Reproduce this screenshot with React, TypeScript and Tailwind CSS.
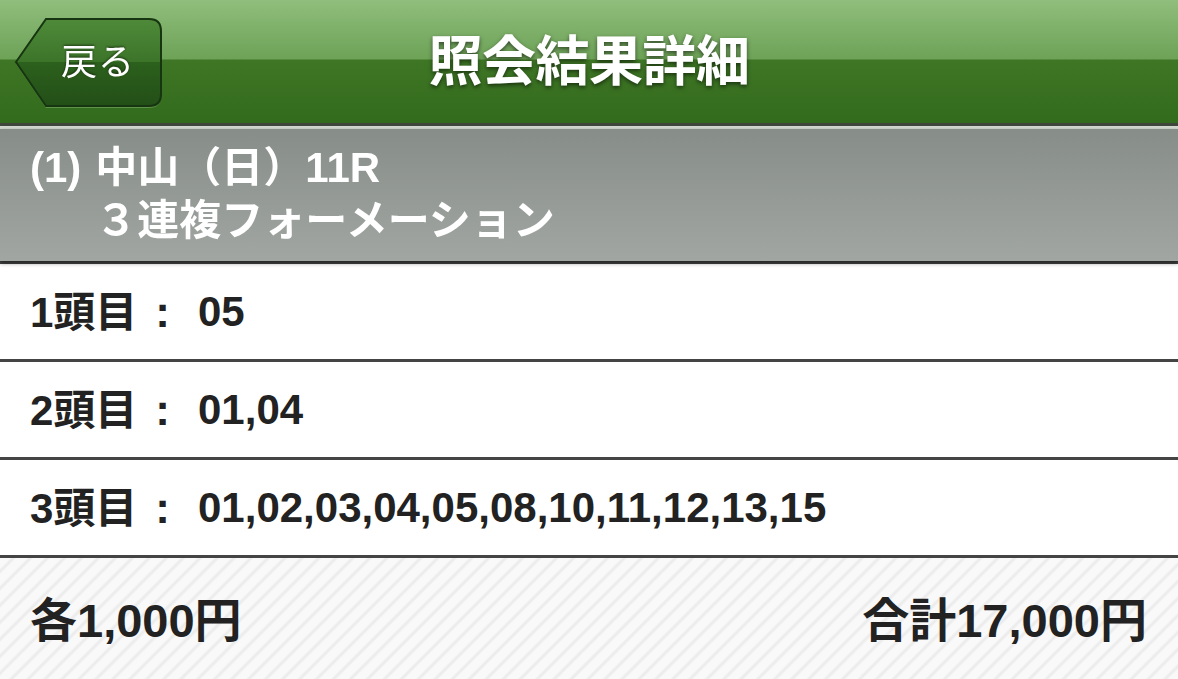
import React from 'react';

const font = "font-['Liberation_Sans','Noto_Sans_CJK_JP',sans-serif]";

const rows = [
  { label: '1頭目', value: '05' },
  { label: '2頭目', value: '01,04' },
  { label: '3頭目', value: '01,02,03,04,05,08,10,11,12,13,15' },
];

function BackButton() {
  return (
    <button className="relative w-[150px] h-[92px] flex items-center justify-center pl-[18px]">
      <svg className="absolute inset-0" width="150" height="92" viewBox="0 0 150 92">
        <defs>
          <linearGradient id="btn" x1="0" y1="0" x2="0" y2="1">
            <stop offset="0" stopColor="#4f8a3a" />
            <stop offset="0.5" stopColor="#3c7429" />
            <stop offset="0.5" stopColor="#2c601d" />
            <stop offset="1" stopColor="#234f17" />
          </linearGradient>
        </defs>
        <path d="M2 47 L32 4 H135 Q147 4 147 16 V79 Q147 91 135 91 H32 Z" fill="#7aa866" opacity="0.6" />
        <path d="M2 45 L32 2 H135 Q147 2 147 14 V77 Q147 89 135 89 H32 Z" fill="url(#btn)" stroke="#163510" strokeWidth="2" />
      </svg>
      <span className="relative text-white text-[36px] leading-none tracking-[1px] drop-shadow-[0_-1px_1px_rgba(0,0,0,0.5)]">戻る</span>
    </button>
  );
}

export default function App() {
  return (
    <div className={`w-[1178px] h-[679px] overflow-hidden bg-white ${font}`}>
      <header className="h-[123px] grid grid-cols-[1fr_auto_1fr] items-center bg-[linear-gradient(to_bottom,#90be7c_0px,#6da257_59px,#3e7625_60px,#336b1d_123px)]">
        <div className="pl-[14px] pt-[2px]">
          <BackButton />
        </div>
        <h1 className="text-white text-[54px] font-bold leading-none tracking-[-0.5px] drop-shadow-[0_2px_2px_rgba(0,0,0,0.55)]">照会結果詳細</h1>
        <div />
      </header>
      <div className="h-[3px] bg-[#3f463b]" />
      <div className="h-[3px] bg-[#d3d9cf]" />

      <section className="h-[132px] bg-[linear-gradient(to_bottom,#878d88,#a1a6a2)] flex pl-[30px] pt-[12px] text-white text-[42px] font-bold leading-[53px] drop-shadow-[0_2px_2px_rgba(0,0,0,0.5)]">
        <span className="mr-[14px]">(1)</span>
        <div className="flex flex-col">
          <span>中山（日）11R</span>
          <span>３連複フォーメーション</span>
        </div>
      </section>
      <div className="h-[3px] bg-[#444]" />

      {rows.map((row) => (
        <div key={row.label}>
          <div className="h-[95px] flex items-center pl-[30px] text-[#222] text-[42px] font-bold leading-none">
            <span className="w-[168px] flex items-baseline">
              {row.label}
              <span className="ml-[18px] text-[44px]">:</span>
            </span>
            <span>{row.value}</span>
          </div>
          <div className="h-[3px] bg-[#444]" />
        </div>
      ))}

      <footer className="h-[121px] flex items-center justify-between pl-[30px] pr-[31px] pt-[4px] text-[#222] text-[47px] font-bold leading-none bg-[repeating-linear-gradient(135deg,#f9f9f9_0px,#f9f9f9_7px,#ececec_9px,#ececec_10px,#f9f9f9_12px)]">
        <span>各1,000円</span>
        <span>合計17,000円</span>
      </footer>
    </div>
  );
}
